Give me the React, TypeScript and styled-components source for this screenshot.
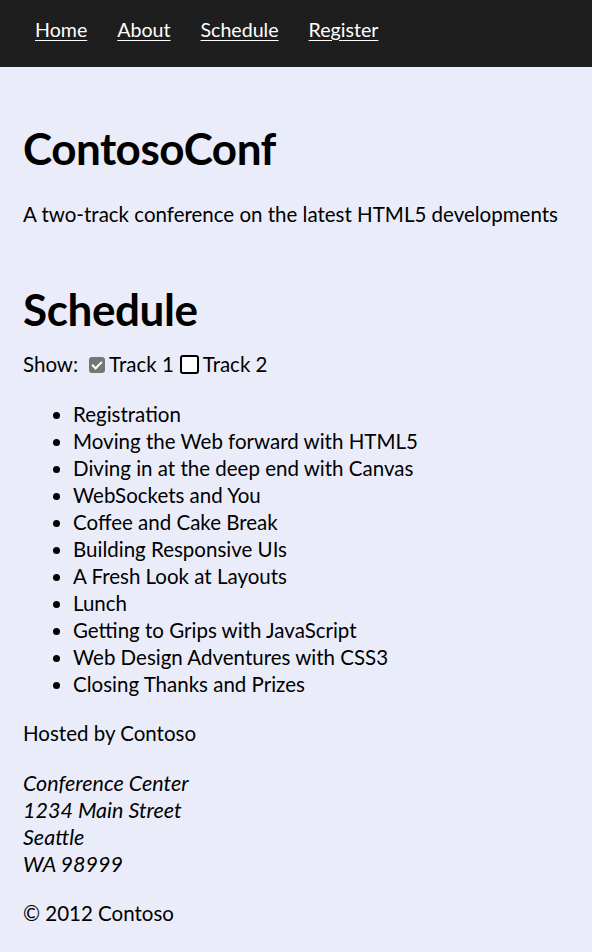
import { createGlobalStyle } from "styled-components";
import styled from "styled-components";

const GlobalStyle = createGlobalStyle`
  html, body {
    margin: 0;
    padding: 0;
    background: #eaedf9;
  }
  body {
    font-family: Lato, "Open Sans", sans-serif;
    color: #000;
  }
`;

const Nav = styled.nav`
  background: #1e1e1e;
  height: 67px;
  display: flex;
  align-items: flex-start;
  gap: 30px;
  padding: 16px 35px 0;
  box-sizing: border-box;
`;

const NavLink = styled.a`
  color: #fff;
  font-size: 19.6px;
  line-height: 27px;
  text-decoration: underline;
  text-underline-offset: 3px;
  cursor: pointer;
`;

const Main = styled.main`
  padding: 0 23px;
`;

const Title = styled.h1`
  font-size: 44px;
  font-weight: 700;
  margin: 51px 0 0;
  line-height: 60px;
  letter-spacing: -0.5px;
`;

const Tagline = styled.p`
  font-size: 20.5px;
  margin: 23px 0 0;
  line-height: 27px;
`;

const SectionTitle = styled.h2`
  font-size: 44px;
  font-weight: 700;
  margin: 53px 0 0;
  line-height: 56px;
  letter-spacing: -0.4px;
`;

const Filter = styled.div`
  display: flex;
  align-items: center;
  font-size: 20.5px;
  line-height: 27px;
  margin-top: 14px;
`;

const Label = styled.label`
  display: flex;
  align-items: center;
`;

const Box = styled.input<{ $focused?: boolean }>`
  appearance: none;
  margin: 0 4px 0 ${({ $focused }) => ($focused ? "6px" : "11px")};
  width: ${({ $focused }) => ($focused ? "19px" : "16px")};
  height: ${({ $focused }) => ($focused ? "19px" : "16px")};
  box-sizing: border-box;
  border-radius: 3px;
  background: ${({ $focused }) => ($focused ? "#fff" : "#767676")};
  border: ${({ $focused }) => ($focused ? "2px solid #000" : "none")};
  display: inline-flex;
  align-items: center;
  justify-content: center;
  &:checked::after {
    content: "";
    width: 4px;
    height: 8px;
    border: solid #fff;
    border-width: 0 2px 2px 0;
    transform: translate(0, -1px) rotate(45deg);
  }
`;

const Sessions = styled.ul`
  margin: 23px 0 0;
  padding-left: 50px;
  font-size: 20.5px;
  line-height: 27px;
`;

const Footer = styled.footer`
  font-size: 20.5px;
  line-height: 27px;
  padding-top: 22px;
`;

const Para = styled.p`
  margin: 0 0 23px;
`;

const Address = styled.address`
  font-style: italic;
  font-size: 21.5px;
  margin-bottom: 22px;
`;

const sessions = [
  "Registration",
  "Moving the Web forward with HTML5",
  "Diving in at the deep end with Canvas",
  "WebSockets and You",
  "Coffee and Cake Break",
  "Building Responsive UIs",
  "A Fresh Look at Layouts",
  "Lunch",
  "Getting to Grips with JavaScript",
  "Web Design Adventures with CSS3",
  "Closing Thanks and Prizes",
];

export default function App() {
  return (
    <>
      <GlobalStyle />
      <Nav>
        <NavLink>Home</NavLink>
        <NavLink>About</NavLink>
        <NavLink>Schedule</NavLink>
        <NavLink>Register</NavLink>
      </Nav>
      <Main>
        <Title>ContosoConf</Title>
        <Tagline>A two-track conference on the latest HTML5 developments</Tagline>
        <SectionTitle>Schedule</SectionTitle>
        <Filter>
          Show:
          <Label>
            <Box type="checkbox" defaultChecked />
            Track 1
          </Label>
          <Label>
            <Box type="checkbox" $focused />
            Track 2
          </Label>
        </Filter>
        <Sessions>
          {sessions.map((s) => (
            <li key={s}>{s}</li>
          ))}
        </Sessions>
        <Footer>
          <Para>Hosted by Contoso</Para>
          <Address>
            Conference Center
            <br />
            1234 Main Street
            <br />
            Seattle
            <br />
            WA 98999
          </Address>
          <Para>© 2012 Contoso</Para>
        </Footer>
      </Main>
    </>
  );
}
